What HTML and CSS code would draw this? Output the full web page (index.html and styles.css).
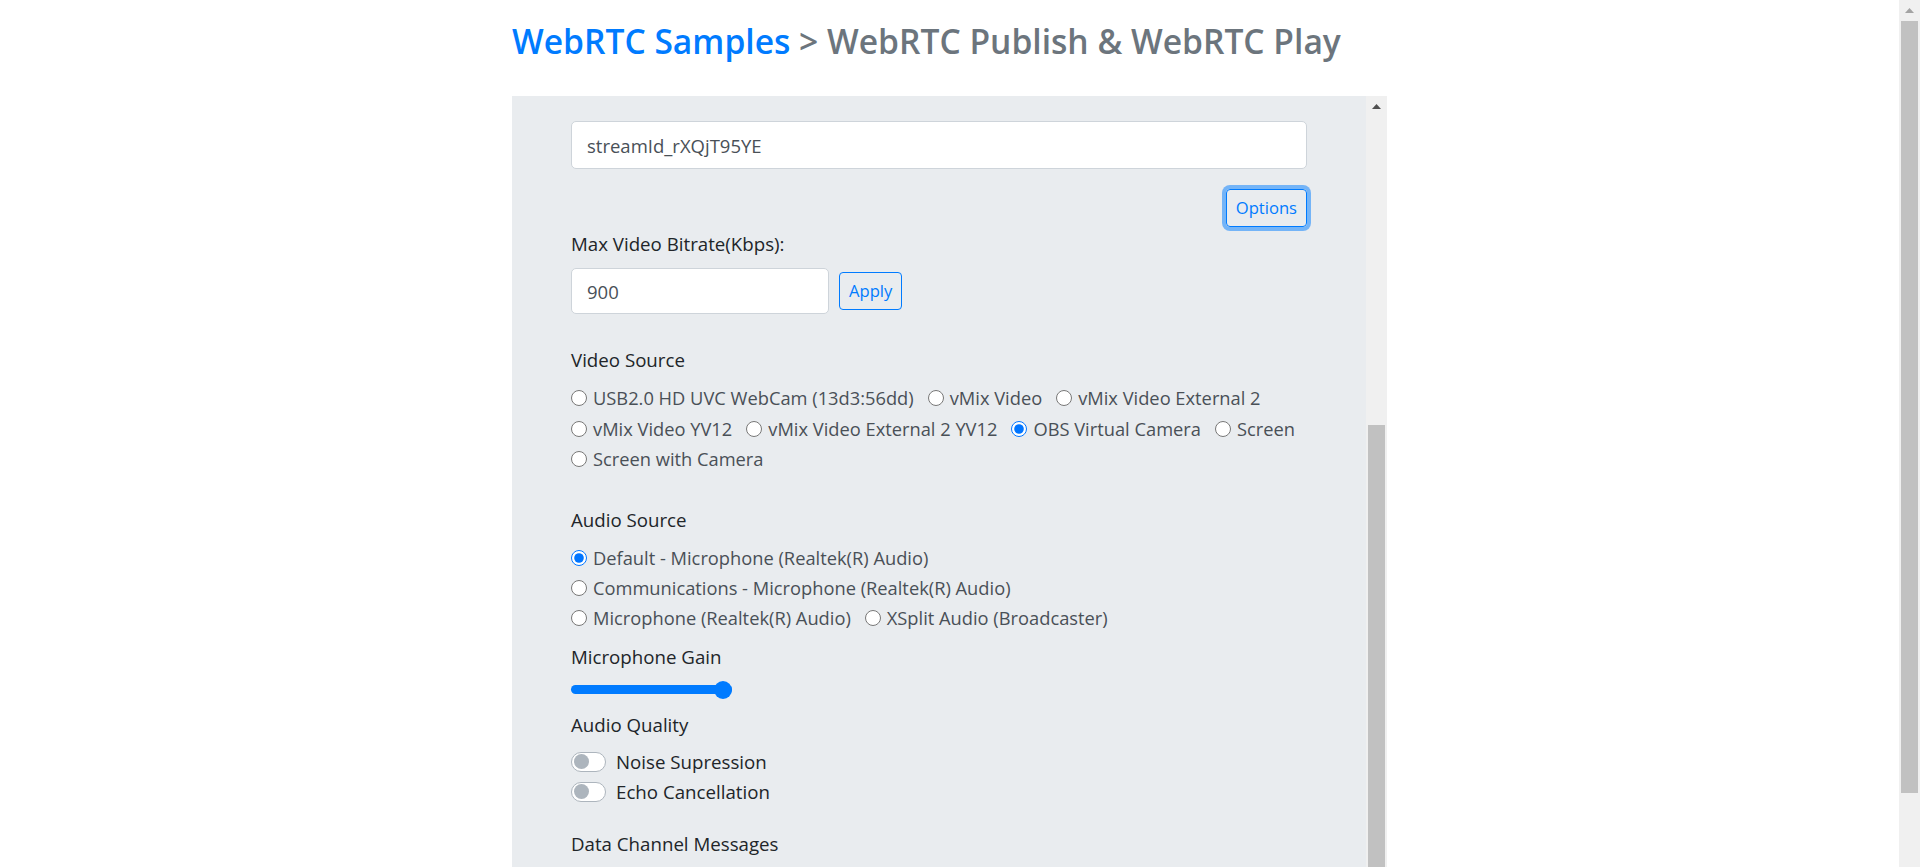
FILE: index.html
```html
<!DOCTYPE html>
<html lang="en">
<head>
<meta charset="utf-8">
<title>WebRTC Publish &amp; WebRTC Play</title>
<link rel="stylesheet" href="styles.css">
</head>
<body>
<div class="page">
  <h1 class="title"><a href="#">WebRTC Samples</a> &gt; WebRTC Publish &amp; WebRTC Play</h1>
  <div class="panel">
    <div class="panel-body">
      <input class="form-control stream" type="text" value="streamId_rXQjT95YE">
      <div class="options-row"><button class="btn focus" type="button">Options</button></div>
      <div class="field-label">Max Video Bitrate(Kbps):</div>
      <div class="bitrate-row">
        <input class="form-control bitrate" type="text" value="900">
        <button class="btn" type="button">Apply</button>
      </div>

      <div class="group video-group">
        <div class="group-label">Video Source</div>
        <div class="radios">
          <div class="radio-row">
            <label class="check"><input type="radio" name="video"><span>USB2.0 HD UVC WebCam (13d3:56dd)</span></label>
            <label class="check"><input type="radio" name="video"><span>vMix Video</span></label>
            <label class="check"><input type="radio" name="video"><span>vMix Video External 2</span></label>
          </div>
          <div class="radio-row">
            <label class="check"><input type="radio" name="video"><span>vMix Video YV12</span></label>
            <label class="check"><input type="radio" name="video"><span>vMix Video External 2 YV12</span></label>
            <label class="check"><input type="radio" name="video" checked><span>OBS Virtual Camera</span></label>
            <label class="check"><input type="radio" name="video"><span>Screen</span></label>
          </div>
          <div class="radio-row">
            <label class="check"><input type="radio" name="video"><span>Screen with Camera</span></label>
          </div>
        </div>
      </div>

      <div class="group audio-group">
        <div class="group-label">Audio Source</div>
        <div class="radios">
          <div class="radio-row">
            <label class="check"><input type="radio" name="audio" checked><span>Default - Microphone (Realtek(R) Audio)</span></label>
          </div>
          <div class="radio-row">
            <label class="check"><input type="radio" name="audio"><span>Communications - Microphone (Realtek(R) Audio)</span></label>
          </div>
          <div class="radio-row">
            <label class="check"><input type="radio" name="audio"><span>Microphone (Realtek(R) Audio)</span></label>
            <label class="check"><input type="radio" name="audio"><span>XSplit Audio (Broadcaster)</span></label>
          </div>
        </div>
      </div>

      <div class="gain-label">Microphone Gain</div>
      <input class="gain" type="range" min="0" max="100" value="100">

      <div class="quality-label">Audio Quality</div>
      <div class="switches">
        <label class="switch"><span class="track"><span class="knob"></span></span><span>Noise Supression</span></label>
        <label class="switch"><span class="track"><span class="knob"></span></span><span>Echo Cancellation</span></label>
      </div>

      <div class="data-label">Data Channel Messages</div>
    </div>
    <div class="vscroll">
      <div class="arrow"><svg width="9" height="5" viewBox="0 0 9 5"><polygon points="0,5 9,5 4.5,0" fill="#505050"/></svg></div>
      <div class="vscroll-gap"></div>
      <div class="vscroll-thumb"></div>
    </div>
  </div>
</div>
<div class="page-scroll">
  <div class="arrow"><svg width="9" height="5" viewBox="0 0 9 5"><polygon points="0,5 9,5 4.5,0" fill="#a3a3a3"/></svg></div>
  <div class="page-thumb"></div>
</div>
</body>
</html>
```

FILE: styles.css
```css
html, body {
  margin: 0;
  height: 100%;
  overflow: hidden;
}

body {
  display: flex;
  background: #fff;
  color: #212529;
  font-family: "Open Sans", "Noto Sans", sans-serif;
}

.page {
  flex: 1;
  min-width: 0;
  display: flex;
  flex-direction: column;
  align-items: center;
}

.title {
  width: 875px;
  margin: 17px 0 31px;
  font-size: 33.6px;
  font-weight: 600;
  line-height: 48px;
  color: #6c757d;
  white-space: nowrap;
}

.title a {
  color: #007bff;
  text-decoration: none;
}

.panel {
  width: 875px;
  flex: 1;
  min-height: 0;
  display: flex;
  background: #e9ecef;
}

.panel-body {
  flex: 1;
  min-width: 0;
  padding: 25px 59px 0;
  font-size: 18.7px;
  line-height: 30px;
}

.form-control {
  display: block;
  box-sizing: border-box;
  height: 48px;
  padding: 0 15px;
  border: 1px solid #ced4da;
  border-radius: 5px;
  background: #fff;
  color: #495057;
  font-family: inherit;
  font-size: 18.5px;
  outline: none;
}

.stream {
  width: 100%;
}

.options-row {
  display: flex;
  justify-content: flex-end;
  margin-top: 20px;
}

.btn {
  box-sizing: border-box;
  height: 38px;
  padding: 0 9px;
  border: 1px solid #007bff;
  border-radius: 4px;
  background: transparent;
  color: #007bff;
  font-family: inherit;
  font-size: 16.6px;
  line-height: 36px;
}

.btn.focus {
  box-shadow: 0 0 0 4px rgba(0, 123, 255, 0.5);
}

.field-label {
  margin-top: 2px;
  margin-bottom: 9px;
}

.bitrate-row {
  display: flex;
  align-items: center;
  gap: 10px;
}

.bitrate {
  width: 258px;
  height: 46px;
}

.group {
  margin-top: 31px;
}

.audio-group {
  margin-top: 30px;
}

.group-label {
  margin-bottom: 8px;
}

.radio-row {
  display: flex;
  height: 30.5px;
  align-items: center;
  white-space: nowrap;
}

.audio-group .radio-row {
  height: 30px;
}

.check {
  display: flex;
  align-items: center;
  margin-right: 14px;
  color: #495057;
  font-size: 18.3px;
}

.check input {
  width: 16px;
  height: 16px;
  margin: 0 6px 0 0;
}

.gain-label {
  margin-top: 9px;
}

.gain {
  -webkit-appearance: none;
  appearance: none;
  display: block;
  width: 161px;
  height: 22px;
  margin: 7px 0 0;
  background: transparent;
}

.gain::-webkit-slider-runnable-track {
  height: 9px;
  border-radius: 5px;
  background: #007bff;
}

.gain::-webkit-slider-thumb {
  -webkit-appearance: none;
  width: 18px;
  height: 18px;
  margin-top: -4.5px;
  border-radius: 50%;
  background: #007bff;
}

.quality-label {
  margin-top: 9px;
}

.switches {
  margin-top: 7px;
}

.switch {
  display: flex;
  align-items: center;
  height: 30px;
}

.track {
  box-sizing: border-box;
  width: 35px;
  height: 20px;
  margin-right: 10px;
  border: 1px solid #adb5bd;
  border-radius: 10px;
  background: #fff;
  display: flex;
  align-items: center;
  padding-left: 2px;
}

.knob {
  width: 15px;
  height: 15px;
  border-radius: 50%;
  background: #adb5bd;
}

.data-label {
  margin-top: 22px;
}

.vscroll {
  width: 21px;
  flex: none;
  display: flex;
  flex-direction: column;
  align-items: center;
  background: #f0f0f0;
}

.arrow {
  width: 100%;
  height: 21px;
  flex: none;
  display: flex;
  align-items: center;
  justify-content: center;
}

.arrow svg {
  display: block;
}

.vscroll-gap {
  height: 308px;
  flex: none;
}

.vscroll-thumb {
  width: 17px;
  flex: 1;
  background: #c1c1c1;
}

.page-scroll {
  width: 21px;
  flex: none;
  display: flex;
  flex-direction: column;
  align-items: center;
  background: #f0f0f0;
}

.page-thumb {
  width: 17px;
  height: 772px;
  background: #c1c1c1;
}
```
